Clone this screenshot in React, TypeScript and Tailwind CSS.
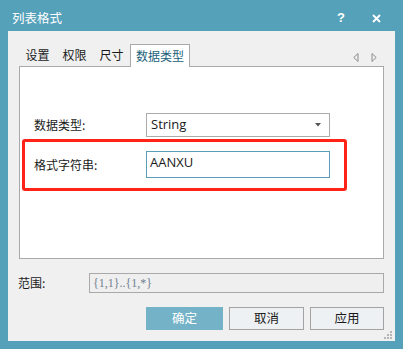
import React from 'react';

const cjk = { fontFamily: '"Noto Sans CJK SC", "Noto Sans", sans-serif' };

function TabArrows() {
  return (
    <div className="flex items-center gap-[12px] pr-[7px] pb-[4px]">
      <svg width="6" height="9" viewBox="0 0 6 9">
        <path d="M5 0.5 L0.8 4.5 L5 8.5 Z" fill="none" stroke="#8a8a8a" strokeWidth="1" />
      </svg>
      <svg width="6" height="9" viewBox="0 0 6 9">
        <path d="M1 0.5 L5.2 4.5 L1 8.5 Z" fill="none" stroke="#8a8a8a" strokeWidth="1" />
      </svg>
    </div>
  );
}

export default function App() {
  const tabs = ['设置', '权限', '尺寸'];

  return (
    <div
      className="w-[403px] h-[349px] bg-[#55a1b9] flex flex-col text-[12px] text-[#1a1a1a] overflow-hidden"
      style={cjk}
    >
      {/* Title bar */}
      <div className="h-[31px] flex items-center pl-[12px] text-white">
        <span className="flex-1 pt-[5px] text-[12.5px]">列表格式</span>
        <span className="w-[10px] text-center font-bold text-[13px] pt-[5px] mr-[26px]" style={{ fontFamily: '"Liberation Sans", sans-serif' }}>?</span>
        <svg className="mr-[22px] mt-[5px]" width="9" height="9" viewBox="0 0 9 9">
          <path d="M1 1 L8 8 M8 1 L1 8" stroke="white" strokeWidth="1.8" />
        </svg>
      </div>

      {/* Body */}
      <div className="relative mx-[8px] mb-[8px] flex-1 bg-[#f0f0f0] flex flex-col px-[11px] pt-[13px]">
        {/* Tabs */}
        <div className="flex items-end h-[22px]">
          {tabs.map((t) => (
            <div key={t} className="w-[37px] h-[22px] flex items-center justify-center">
              {t}
            </div>
          ))}
          <div className="relative z-10 w-[60px] h-[23px] -mb-[1px] bg-white border border-b-0 border-[#a9a9a9] flex items-center justify-center text-[#1d5f7c]">
            数据类型
          </div>
          <div className="flex-1" />
          <TabArrows />
        </div>

        {/* Tab content */}
        <div className="h-[193px] bg-white border border-[#a9a9a9] pt-[46px] pl-[14px] flex flex-col gap-[14px]">
          <div className="flex items-center">
            <span className="w-[112px]">数据类型:</span>
            <div className="w-[184px] h-[24px] border border-[#ababab] bg-white flex items-center pl-[4px] pr-[8px]">
              <span className="flex-1 text-[13px]" style={{ fontFamily: '"Open Sans", sans-serif' }}>String</span>
              <svg width="6" height="4" viewBox="0 0 6 4">
                <path d="M0 0 L6 0 L3 3.5 Z" fill="#555" />
              </svg>
            </div>
          </div>
          <div className="flex items-center">
            <span className="w-[112px]">格式字符串:</span>
            <div className="w-[184px] h-[27px] border border-[#5a9fb6] bg-white flex items-center pl-[3px] pb-[3px]">
              <span className="text-[13px]" style={{ fontFamily: '"Open Sans", sans-serif' }}>AANXU</span>
            </div>
          </div>
        </div>

        {/* Range */}
        <div className="flex items-center mt-[14px] -ml-[1px]">
          <span className="w-[71px]">范围:</span>
          <div className="flex-1 h-[20px] border border-[#a9a9a9] bg-[#efefef] flex items-center pl-[3px] text-[12px] text-[#6f8091]" style={{ fontFamily: '"Liberation Serif", serif' }}>
            {'{1,1}..{1,*}'}
          </div>
        </div>

        {/* Buttons */}
        <div className="flex justify-end gap-[6px] mt-[14px]">
          <button className="w-[77px] h-[23px] bg-[#74b3c7] text-white text-[12.5px]">确定</button>
          <button className="w-[75px] h-[23px] bg-[#eef1f4] border border-[#a3a3a3] text-[12.5px]">取消</button>
          <button className="w-[74px] h-[23px] bg-[#eef1f4] border border-[#a3a3a3] text-[12.5px]">应用</button>
        </div>

        {/* Resize grip */}
        <svg className="absolute right-[3px] bottom-[2px]" width="8" height="8" viewBox="0 0 8 8">
          <rect x="6" y="0" width="2" height="2" fill="#b5b5b5" />
          <rect x="3" y="3" width="2" height="2" fill="#b5b5b5" />
          <rect x="6" y="3" width="2" height="2" fill="#b5b5b5" />
          <rect x="0" y="6" width="2" height="2" fill="#b5b5b5" />
          <rect x="3" y="6" width="2" height="2" fill="#b5b5b5" />
          <rect x="6" y="6" width="2" height="2" fill="#b5b5b5" />
        </svg>

        {/* Red annotation box */}
        <div className="absolute left-[14px] top-[108px] w-[325px] h-[52px] border-[3px] border-[#ff2318] rounded-[3px] pointer-events-none" />
      </div>
    </div>
  );
}
